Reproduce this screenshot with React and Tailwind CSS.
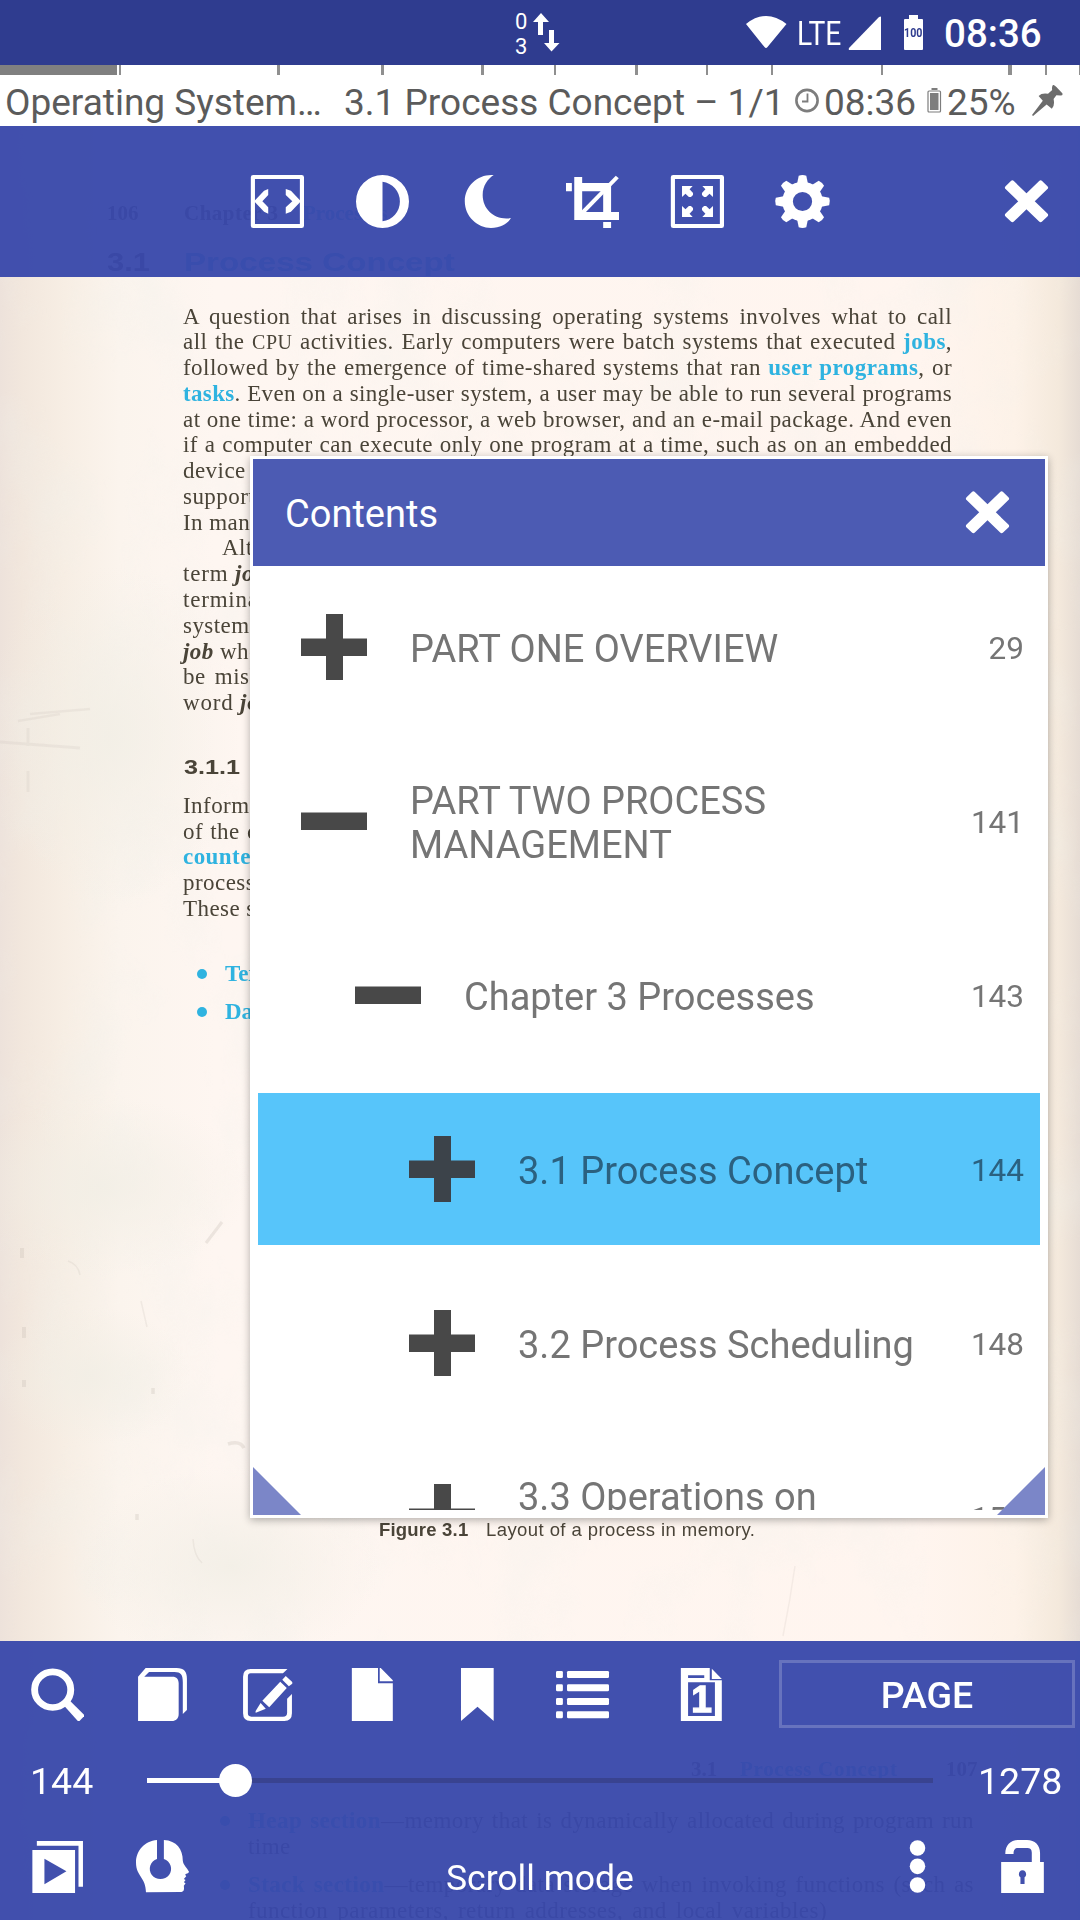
import React from "react";

const ROBOTO = "font-[Roboto,sans-serif]";
const SERIF = "font-['Liberation_Serif',serif]";
const SANS = "font-['Liberation_Sans',sans-serif]";

/* 53px toolbar glyphs share one 154 x 159 drawing grid */
function Glyph({ children, className = "" }) {
  return (
    <svg viewBox="0 0 154 159" preserveAspectRatio="none" fill="#fff" className={"block h-[53px] w-[53px] shrink-0 overflow-visible " + className}>
      {children}
    </svg>
  );
}

const FitWidth = () => (
  <Glyph>
    <rect x="5.5" y="6" width="142.5" height="147" rx="1" fill="none" stroke="#fff" strokeWidth="12" />
    <path d="M9 79L38 47L50 42V60L33 79L50 97V116L38 110Z M145 79L116 47L101 42V60L120 79L101 97V116L116 110Z" />
  </Glyph>
);
const Contrast = () => (
  <Glyph>
    <path fillRule="evenodd" d="M77 0A77 79.5 0 0 1 77 159A77 79.5 0 0 1 77 0Z M77 20A58 60 0 0 1 77 139Z" />
  </Glyph>
);
const Moon = () => (
  <Glyph>
    <path d="M95 0C52 -4 11 30 11 79C11 125 48 159 87 159C115 159 137 145 145 129C100 137 63 105 63 60C63 32 78 12 95 0Z" />
  </Glyph>
);
const Crop = () => (
  <Glyph>
    <path fillRule="evenodd" d="M24 6H47V24H131V111H154V135H24Z M47 49V111H108V49Z" />
    <path d="M0 24H17V49H0Z M108 141H131V159H108Z" />
    <path d="M48 113L149 6" stroke="#fff" strokeWidth="12" />
  </Glyph>
);
const ARROW = "M32 33H63L54 43L64 54V60L58 66H52L42 56L32 66Z";
const Fullscreen = () => (
  <Glyph>
    <rect x="5.5" y="6" width="142.5" height="147" rx="1" fill="none" stroke="#fff" strokeWidth="12" />
    <path d={ARROW} />
    <path d={ARROW} transform="matrix(-1 0 0 1 154 0)" />
    <path d={ARROW} transform="matrix(1 0 0 -1 0 159)" />
    <path d={ARROW} transform="matrix(-1 0 0 -1 154 159)" />
  </Glyph>
);
const Gear = () => (
  <Glyph>
    {[0, 45, 90, 135, 180, 225, 270, 315].map((a) => (
      <path key={a} d="M60 32L66 2Q77 -2 88 2L94 32Z" transform={`rotate(${a} 77 79.5)`} />
    ))}
    <path fillRule="evenodd" d="M77 20a59 59.5 0 0 1 0 119a59 59.5 0 0 1 0 -119Z M77 51a27.5 28 0 0 0 0 57a27.5 28 0 0 0 0 -57Z" />
  </Glyph>
);
const Close = () => (
  <Glyph>
    <g transform="translate(77 79)">
      <rect x="-75" y="-17" width="150" height="34" rx="6" transform="rotate(45)" />
      <rect x="-75" y="-17" width="150" height="34" rx="6" transform="rotate(-45)" />
    </g>
  </Glyph>
);
const Search = () => (
  <Glyph>
    <ellipse cx="63" cy="65" rx="52.5" ry="53.5" fill="none" stroke="#fff" strokeWidth="20" />
    <path d="M95 112L111 96L154 140V145L141 159H136Z" />
  </Glyph>
);
const Books = () => (
  <Glyph>
    <path d="M6 26L28 0H118C140 0 148 12 148 32V126L136 138V42C136 20 130 12 112 12H38L24 26H106C118 26 124 34 124 46V138C124 152 116 159 104 159H6Z" />
  </Glyph>
);
const Edit = () => (
  <Glyph>
    <path d="M135 3L122 16H28Q20 16 20 26V136Q20 146 30 146H122Q134 146 134 134V92L148 78V136Q148 159 126 159H28Q6 159 6 136V26Q6 3 28 3Z" />
    <path d="M62 98L114 41L133 60L82 118Z M120 35L130 24L149 42V47L139 55Z M57 105L72 122L43 134Q41 132 43 128Z" />
  </Glyph>
);
const Doc = () => (
  <Glyph>
    <path d="M17 0H93V46H136V159H17Z M98 0H101L136 37V40H98Z" />
  </Glyph>
);
const Bookmark = () => (
  <Glyph>
    <path d="M29 0H124V159L77 116L29 159Z" />
  </Glyph>
);
const List = () => (
  <Glyph>
    {[9, 49, 90, 130].map((y) => (
      <g key={y}>
        <rect x="0" y={y} width="20" height="21" rx="4" />
        <rect x="32" y={y} width="122" height="21" rx="4" />
      </g>
    ))}
  </Glyph>
);
const PageOne = () => (
  <Glyph>
    <path fillRule="evenodd" d="M17 0H101V37H136V159H17Z M38 22V30H85V22Z M38 43V144H116V43Z" />
    <path d="M107 2L136 33H107Z" />
    <text x="77" y="132" textAnchor="middle" fontFamily="Liberation Sans, sans-serif" fontWeight="700" fontSize="108" stroke="#fff" strokeWidth="4">
      1
    </text>
  </Glyph>
);
const Slides = () => (
  <Glyph>
    <path fillRule="evenodd" d="M4 30H128V159H4Z M39 56V133L103 94Z" />
    <path d="M17 3H151V140H138V17H17Z" />
  </Glyph>
);
const Listener = () => (
  <Glyph>
    <path d="M61 0V57A31 31 0 1 0 81 57V0C118 2 136 28 136 62C137 74 149 84 154 95C154 100 143 101 143 104L146 109L139 117L144 120L139 127L144 130L139 137C140 148 141 156 128 156L29 157C29 112 0 108 0 68C0 32 25 3 61 0Z" />
  </Glyph>
);
const More = () => (
  <Glyph>
    {[24, 79, 135].map((y) => (
      <ellipse key={y} cx="77" cy={y} rx="22.5" ry="23.5" />
    ))}
  </Glyph>
);
const Unlock = () => (
  <Glyph>
    <path fillRule="evenodd" d="M15 66H104V38C104 28 99 24 91 24H64C55 24 51 29 51 42H27C27 15 42 0 65 0H90C113 0 128 15 128 40V66H139V159H15Z M77 91C66 91 63 106 71 112V132H83V112C91 106 88 91 77 91Z" />
  </Glyph>
);

const TICKS = [
  [119, 2], [277, 3], [381, 3], [481, 3], [554, 2], [635, 3], [706, 2], [771, 2], [881, 2], [1008, 4], [1045, 2], [1079, 1],
];

function StatusBar() {
  return (
    <div className="flex h-[65px] shrink-0 items-start bg-[#2f3c8f] text-white">
      <div className="ml-[515px] w-[12px] pt-[9px] text-[22px] leading-[25px]">
        <div>0</div>
        <div>3</div>
      </div>
      <svg className="ml-[5px] mt-[13px] block h-[39px] w-[28px]" viewBox="0 0 28 39" fill="#fff">
        <path d="M9 0L17 9H11V22H6V9H1Z M17 17H22V30H27.5L19.5 38.500L12 30H17Z" />
      </svg>
      <svg className="ml-[185px] mt-[15px] block h-[35px] w-[43px]" viewBox="0 0 43 35" fill="#fff">
        <path d="M1 9Q21 -7 41.500 9L22.500 32Q21 34 19.500 32Z" />
      </svg>
      <div className="ml-[9px] mt-[13px] w-[44px] origin-left scale-x-[0.83] text-[34px] leading-10">LTE</div>
      <svg className="ml-[7px] mt-[16px] block h-[35px] w-[34px]" viewBox="0 0 34 35" fill="#fff">
        <path d="M33 1V34H2Q0 34 1 32L31 1Q33 0 33 1Z" />
      </svg>
      <div className="ml-[22px] mt-[15px] flex flex-col items-center">
        <div className="h-[4px] w-[9px] bg-white" />
        <div className="flex h-[31px] w-[19px] items-start justify-center rounded-[1px] bg-white pt-[7px]">
          <span className="scale-x-[0.82] text-[13px] font-bold leading-[13px] text-[#2f3c8f]">100</span>
        </div>
      </div>
      <div className="ml-[21px] mt-[12px] text-[38.500px] font-medium leading-[44px]">08:36</div>
    </div>
  );
}

function BookBar() {
  return (
    <div className="relative flex h-[61px] shrink-0 items-start bg-white text-[37px] leading-[43px] text-[#5b5b5b]">
      <div className="absolute left-0 top-0 h-[10px] w-full">
        <div className="h-[10px] w-[117px] bg-[#808080]" />
        {TICKS.map(([x, w]) => (
          <div key={x} className="absolute top-0 h-[10px] bg-[#8f8f8f]" style={{ left: x, width: w }} />
        ))}
      </div>
      <div className="ml-[5px] mt-[16px] w-[339px] whitespace-nowrap">Operating System…</div>
      <div className="mt-[16px] w-[451px] whitespace-nowrap">3.1 Process Concept – 1/1</div>
      <svg className="mt-[23px] block h-[25px] w-[25px]" viewBox="0 0 25 25" fill="none" stroke="#7d7d7d">
        <circle cx="12" cy="12.500" r="10.600" strokeWidth="2.600" />
        <path d="M12.500 5.500V13.500H7" strokeWidth="1.800" />
      </svg>
      <div className="ml-[4px] mt-[16px] w-[103px]">08:36</div>
      <svg className="mt-[23px] block h-[25px] w-[15px]" viewBox="0 0 15 25" fill="#7d7d7d">
        <path d="M4.500 0H10.500V2H4.500Z" />
        <rect x="1" y="3" width="12.500" height="21" rx="1" fill="none" stroke="#7d7d7d" strokeWidth="1.200" />
        <rect x="3" y="5" width="8.500" height="17" />
      </svg>
      <div className="ml-[5px] mt-[16px] w-[85px]">25%</div>
      <svg className="mt-[20px] block h-[31px] w-[31px]" viewBox="0 0 89 91" preserveAspectRatio="none" fill="#6c6c6c">
        <path d="M60 0Q64 -1 70 6L87 24Q90 30 82 31L70 30L62 41Q66 60 57 70L42 57L3 91L0 88L31 46L19 32Q28 23 46 26L58 15Q56 6 60 0Z" />
      </svg>
    </div>
  );
}

const B = ({ children }) => <b className="font-bold text-[#2fb3e0]">{children}</b>;
const BI = ({ children }) => <b className="font-bold italic">{children}</b>;

function Line({ children, className = "" }) {
  return <div className={"h-[25.77px] w-[769px] whitespace-nowrap [text-align-last:justify] " + className}>{children}</div>;
}
function Part({ children, className = "" }) {
  return <div className={"h-[25.77px] whitespace-nowrap " + className}>{children}</div>;
}

function Paper() {
  return (
    <svg className="absolute inset-0 h-full w-full" viewBox="0 0 1080 1794" preserveAspectRatio="none">
      <defs>
        <linearGradient id="sheet" x1="0" x2="1" y1="0" y2="0">
          <stop offset="0" stopColor="#ede2db" />
          <stop offset="0.02" stopColor="#f2e7dd" />
          <stop offset="0.06" stopColor="#f7eee4" />
          <stop offset="0.11" stopColor="#fbf4ed" />
          <stop offset="0.2" stopColor="#fef6f1" />
          <stop offset="0.85" stopColor="#fff5ef" />
          <stop offset="0.94" stopColor="#fdf2e8" />
          <stop offset="0.98" stopColor="#f4e9dc" />
          <stop offset="1" stopColor="#e6dcd4" />
        </linearGradient>
        <radialGradient id="stain">
          <stop offset="0" stopColor="#f1eee5" stopOpacity="0.8" />
          <stop offset="1" stopColor="#f1eee5" stopOpacity="0" />
        </radialGradient>
        <filter id="fibres" x="0" y="0" width="100%" height="100%">
          <feTurbulence type="fractalNoise" baseFrequency="0.014 0.009" numOctaves="4" seed="7" />
          <feColorMatrix values="0 0 0 0 0.86  0 0 0 0 0.87  0 0 0 0 0.83  0 0 1.6 0 -0.72" />
        </filter>
      </defs>
      <rect width="1080" height="1794" fill="url(#sheet)" />
      <rect width="1080" height="1794" filter="url(#fibres)" opacity="0.4" />
      <ellipse cx="110" cy="610" rx="130" ry="170" fill="url(#stain)" />
      <ellipse cx="100" cy="1060" rx="150" ry="90" fill="url(#stain)" />
      <ellipse cx="90" cy="1250" rx="100" ry="70" fill="url(#stain)" />
      <ellipse cx="230" cy="1440" rx="150" ry="100" fill="url(#stain)" />
      <g stroke="#c9c0b8" fill="none" opacity="0.32">
        <path d="M795 1440Q790 1475 783 1510" strokeWidth="1.500" opacity="0.6" />
        <path d="M30 588L90 583M18 595L60 588" strokeWidth="2.500" opacity="0.6" />
        <path d="M28 602V620M28 645V666M0 616L80 622" strokeWidth="3" opacity="0.6" />
        <path d="M222 1096L206 1117" strokeWidth="3" />
        <path d="M22 1122V1132M24 1201V1212M24 1254V1261" strokeWidth="4" />
        <path d="M68 1135Q78 1138 80 1149M141 1175L147 1201M193 1413Q194 1430 202 1437" strokeWidth="1.500" opacity="0.7" />
        <path d="M228 1318Q240 1314 244 1322M153 1262V1268M137 1388V1394" strokeWidth="3.500" />
      </g>
    </svg>
  );
}

function BookPage() {
  return (
    <div className={"relative h-[1794px] overflow-hidden text-[23px] leading-[25.77px] text-[#4a4438] " + SERIF}>
      <Paper />
      <div className="relative">
        <div className="flex h-[101px] items-end pl-[107px] text-[21px] font-bold">
          <div className="w-[77px]">106</div>
          <div className="w-[119px] tracking-[0.5px]">Chapter 3</div>
          <B>Processes</B>
        </div>
        <div className={"flex h-[49px] items-end pl-[107px] text-[26px] font-bold " + SANS}>
          <div className="w-[77px]"><span className="inline-block origin-left scale-x-[1.19]">3.1</span></div>
          <div className="origin-left scale-x-[1.275] text-[#2fb3e0]">Process Concept</div>
        </div>

        <div className="ml-[183px] mt-[27.600px] tracking-[0.45px]">
          <Line>A question that arises in discussing operating systems involves what to call</Line>
          <Line>
            all the <span className="text-[20px]">CPU</span> activities. Early computers were batch systems that executed <B>jobs</B>,
          </Line>
          <Line>followed by the emergence of time-shared systems that ran <B>user programs</B>, or</Line>
          <Line className="tracking-[0.34px]"><B>tasks</B>. Even on a single-user system, a user may be able to run several programs</Line>
          <Line>at one time: a word processor, a web browser, and an e-mail package. And even</Line>
          <Line>if a computer can execute only one program at a time, such as on an embedded</Line>
          <Part>device</Part>
          <Part>support</Part>
          <Part>In many</Part>
          <Part className="pl-[39px]">Altho</Part>
          <Part className="tracking-[0.8px]">term <BI>job</BI></Part>
          <Part className="tracking-[0.8px]">terminal</Part>
          <Part>systems</Part>
          <Part><BI>job</BI> when</Part>
          <Part className="[word-spacing:3px]">be misle</Part>
          <Part className="tracking-[0.8px]">word <BI>job</BI></Part>
        </div>

        <div className={"ml-[184px] mt-[38px] h-[27px] text-[21px] font-bold " + SANS}>
          <span className="inline-block origin-left scale-x-[1.2]">3.1.1</span>
        </div>
        <div className="ml-[183px] mt-[12px] tracking-[0.45px]">
          <Part>Informa</Part>
          <Part className="[word-spacing:1px]">of the cu</Part>
          <Part><B>counter</B></Part>
          <Part>processo</Part>
          <Part>These se</Part>
        </div>

        <div className="ml-[197px] mt-[39px] flex flex-col gap-[12.700px]">
          {["Text", "Data"].map((t) => (
            <div key={t} className="flex h-[25.77px] items-center">
              <div className="h-[10px] w-[10px] rounded-full bg-[#2fb3e0]" />
              <div className="ml-[18px]"><B>{t}</B></div>
            </div>
          ))}
        </div>

        <div className={"ml-[379px] mt-[492px] flex h-[26px] text-[18.500px] " + SANS}>
          <b className="w-[107px] whitespace-nowrap tracking-[0.2px]">Figure 3.1</b>
          <span className="whitespace-nowrap tracking-[0.42px]">Layout of a process in memory.</span>
        </div>

        <div className="ml-[691px] mt-[214px] flex h-[26px] text-[21px] font-bold">
          <div className="w-[49px]">3.1</div>
          <div className="w-[206px] tracking-[0.7px]"><B>Process Concept</B></div>
          <div>107</div>
        </div>
        <div className="ml-[248px] mt-[25px] w-[725px] tracking-[0.45px]">
          <div className="-ml-[28px] flex items-center">
            <div className="mr-[18px] h-[10px] w-[10px] shrink-0 rounded-full bg-[#2fb3e0]" />
            <div className="w-[726px] shrink-0 whitespace-nowrap [text-align-last:justify]"><B>Heap section</B>—memory that is dynamically allocated during program run</div>
          </div>
          <div>time</div>
          <div className="-ml-[28px] mt-[13px] flex items-center">
            <div className="mr-[18px] h-[10px] w-[10px] shrink-0 rounded-full bg-[#2fb3e0]" />
            <div className="w-[726px] shrink-0 whitespace-nowrap [text-align-last:justify]"><B>Stack section</B>—temporary data storage when invoking functions (such as</div>
          </div>
          <div className="w-[579px] whitespace-nowrap [text-align-last:justify]">function parameters, return addresses, and local variables)</div>
        </div>
      </div>
    </div>
  );
}

function TopTools() {
  return (
    <div className="absolute inset-x-0 top-0 flex h-[151px] items-start bg-[#3949ab]/96 pl-[251px] pt-[49px]">
      <div className="flex gap-[52px]">
        <FitWidth />
        <Contrast />
        <Moon />
        <Crop />
        <Fullscreen />
        <Gear />
      </div>
      <div className="ml-[171px]">
        <Close />
      </div>
    </div>
  );
}

const ROWS = [
  { open: false, depth: 0, title: "PART ONE OVERVIEW", page: "29" },
  { open: true, depth: 0, title: "PART TWO PROCESS MANAGEMENT", page: "141" },
  { open: true, depth: 1, title: "Chapter 3 Processes", page: "143" },
  { open: false, depth: 2, title: "3.1 Process Concept", page: "144", active: true },
  { open: false, depth: 2, title: "3.2 Process Scheduling", page: "148" },
  { open: false, depth: 2, title: "3.3 Operations on Processes", page: "154" },
];

function Row({ row }) {
  return (
    <div className={"flex h-[152px] shrink-0 items-center pr-[16px] " + (row.active ? "bg-[#57c5fa] text-[#2b6180]" : "text-[#757575]")}>
      <div style={{ width: 43 + row.depth * 54 }} className="shrink-0" />
      <svg viewBox="0 0 66 66" className="block h-[66px] w-[66px] shrink-0" fill={row.active ? "#3c434a" : "#484848"}>
        <path d={row.open ? "M0 24.500H66V42H0Z" : "M25 0H42V24.500H66V42H42V66H25V42H0V24.500H25Z"} />
      </svg>
      <div className="ml-[43px] flex-1 pt-[3px] text-[38px] leading-[44px]">{row.title}</div>
      <div className="w-[60px] shrink-0 pt-[3px] text-right text-[31.500px]">{row.page}</div>
    </div>
  );
}

function Contents() {
  return (
    <div className="absolute left-[250px] top-[330px] flex h-[1062px] w-[798px] flex-col border-[3px] border-white bg-white shadow-[0_2px_8px_rgba(0,0,0,0.3)]">
      <div className="flex h-[107px] shrink-0 items-center justify-between bg-[#4c5bb3] pl-[32px] pr-[31px] text-[38px] text-white">
        <span className="pt-[3px]">Contents</span>
        <Close />
      </div>
      <div className="flex h-[944px] shrink-0 flex-col gap-[22px] overflow-hidden px-[5px] pt-[5px]">
        {ROWS.map((r) => (
          <Row key={r.title} row={r} />
        ))}
      </div>
      <svg className="absolute bottom-0 left-0 block h-12 w-12" viewBox="0 0 48 48"><path d="M0 0L48 48H0Z" fill="#7b86c8" /></svg>
      <svg className="absolute bottom-0 right-0 block h-12 w-12" viewBox="0 0 48 48"><path d="M48 0V48H0Z" fill="#7b86c8" /></svg>
    </div>
  );
}

function BottomTools() {
  return (
    <div className="absolute inset-x-0 bottom-0 h-[279px] bg-[#3949ab]/96 text-[37.500px] text-white">
      <div className="flex h-[106px] items-start pl-[31px] pt-[19px]">
        <div className="flex gap-[52px] pt-[8px]">
          <Search />
          <Books />
          <Edit />
          <Doc />
          <Bookmark />
          <List />
        </div>
        <div className="ml-[66px] pt-[8px]">
          <PageOne />
        </div>
        <div className="ml-[51px] flex h-[68px] w-[296px] items-center justify-center border-[3px] border-white/20 pt-[2px] font-medium">PAGE</div>
      </div>
      <div className="flex h-[66px] items-center">
        <div className="ml-[30px] w-[117px] pt-[3px]">144</div>
        <div className="relative h-[5px] w-[786px] bg-[#394390]">
          <div className="h-[5px] w-[88px] bg-white" />
          <div className="absolute -top-[14px] left-[72px] h-[33px] w-[33px] rounded-full bg-white" />
        </div>
        <div className="ml-[45px] pt-[3px]">1278</div>
      </div>
      <div className="flex items-start pl-[31px] pt-[27px]">
        <Slides />
        <div className="ml-[52px]"><Listener /></div>
        <div className="ml-[257px] mt-[17px] w-[200px] whitespace-nowrap text-[35.500px] leading-[42px]">Scroll mode</div>
        <div className="ml-[245px]"><More /></div>
        <div className="ml-[52px]"><Unlock /></div>
      </div>
    </div>
  );
}

export default function App() {
  return (
    <div className={"flex h-[1920px] w-[1080px] flex-col overflow-hidden " + ROBOTO}>
      <StatusBar />
      <BookBar />
      <main className="relative h-[1794px]">
        <BookPage />
        <TopTools />
        <Contents />
        <BottomTools />
      </main>
    </div>
  );
}
